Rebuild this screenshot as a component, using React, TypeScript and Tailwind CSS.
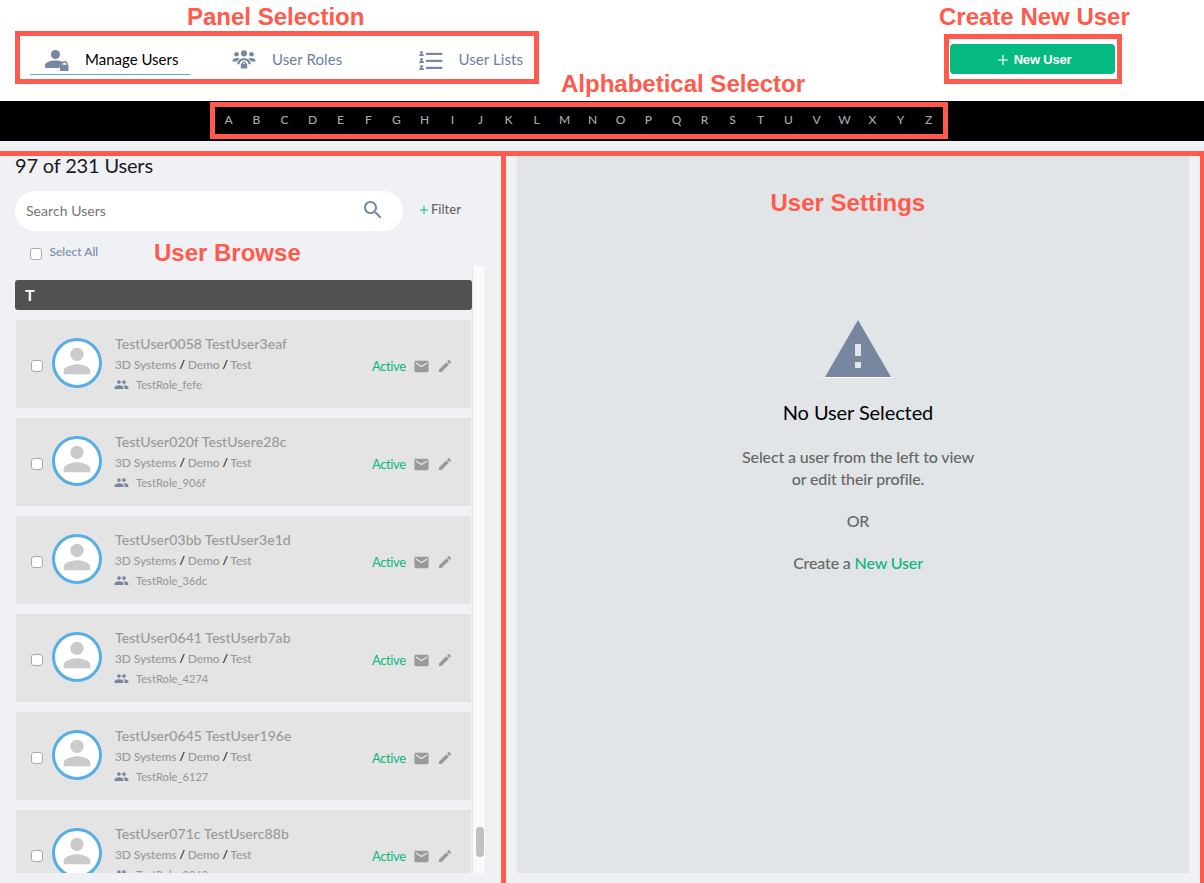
import React from 'react';

const LETTERS = 'ABCDEFGHIJKLMNOPQRSTUVWXYZ'.split('');

const USERS = [
  { name: 'TestUser0058 TestUser3eaf', role: 'TestRole_fefe' },
  { name: 'TestUser020f TestUsere28c', role: 'TestRole_906f' },
  { name: 'TestUser03bb TestUser3e1d', role: 'TestRole_36dc' },
  { name: 'TestUser0641 TestUserb7ab', role: 'TestRole_4274' },
  { name: 'TestUser0645 TestUser196e', role: 'TestRole_6127' },
  { name: 'TestUser071c TestUserc88b', role: 'TestRole_9868' },
];

function Icon({ d, className }: { d: string; className: string }) {
  return (
    <svg viewBox="0 0 24 24" fill="currentColor" className={`block shrink-0 ${className}`}>
      <path d={d} />
    </svg>
  );
}

const PERSON =
  'M12 12c2.21 0 4-1.79 4-4s-1.79-4-4-4-4 1.79-4 4 1.79 4 4 4zm0 2c-2.67 0-8 1.34-8 4v2h16v-2c0-2.66-5.33-4-8-4z';
const MAIL =
  'M20 4H4c-1.1 0-1.99.9-1.99 2L2 18c0 1.1.9 2 2 2h16c1.1 0 2-.9 2-2V6c0-1.1-.9-2-2-2zm0 4l-8 5-8-5V6l8 5 8-5v2z';
const PENCIL =
  'M3 17.25V21h3.75L17.81 9.94l-3.75-3.75L3 17.25zM20.71 7.04c.39-.39.39-1.02 0-1.41l-2.34-2.34c-.39-.39-1.02-.39-1.41 0l-1.83 1.83 3.75 3.75 1.83-1.83z';
const SEARCH =
  'M15.5 14h-.79l-.28-.27C15.41 12.59 16 11.11 16 9.5 16 5.91 13.09 3 9.5 3S3 5.91 3 9.5 5.91 16 9.5 16c1.61 0 3.09-.59 4.23-1.57l.27.28v.79l5 4.99L20.49 19l-4.99-5zm-6 0C7.01 14 5 11.99 5 9.5S7.01 5 9.5 5 14 7.01 14 9.5 11.99 14 9.5 14z';
const PEOPLE =
  'M16 11c1.66 0 2.99-1.34 2.99-3S17.66 5 16 5c-1.66 0-3 1.34-3 3s1.34 3 3 3zm-8 0c1.66 0 2.99-1.34 2.99-3S9.66 5 8 5C6.34 5 5 6.34 5 8s1.34 3 3 3zm0 2c-2.33 0-7 1.17-7 3.5V19h14v-2.5c0-2.33-4.67-3.5-7-3.5zm8 0c-.29 0-.62.02-.97.05 1.16.84 1.97 1.97 1.97 3.45V19h6v-2.5c0-2.33-4.67-3.5-7-3.5z';
const WARNING = 'M1 21h22L12 2 1 21zm12-3h-2v-2h2v2zm0-4h-2v-4h2v4z';

function ManageIcon() {
  return (
    <svg width="24" height="22" viewBox="0 0 24 22" fill="#76879f" className="block shrink-0">
      <circle cx="10.5" cy="4.5" r="4.5" />
      <path d="M0 18v-2.8C0 12 5 10.4 10.5 10.4c3 0 5.600.5 7.500 1.500-1.300.7-2 1.700-2 3h-1.200V18z" />
      <path d="M15 14.700h1.400v-.7a3.100 3.100 0 0 1 6.200 0v.7H23.500V21H15zm2.800 0h3.400v-.6a1.700 1.700 0 0 0-3.400 0z" />
    </svg>
  );
}

function RolesIcon() {
  return (
    <svg width="24" height="20" viewBox="0 0 24 20" className="block shrink-0">
      <g fill="#76879f">
        <circle cx="12" cy="3.300" r="3.100" />
        <circle cx="4.500" cy="4.200" r="2.300" />
        <circle cx="19.500" cy="4.200" r="2.300" />
        <path d="M.4 11.500C.4 9 2.500 7.900 4.800 7.900c1.200 0 2.100.2 2.900.6L4.700 11.500z" />
        <path d="M23.600 11.500c0-2.500-2.100-3.600-4.400-3.600-1.200 0-2.100.2-2.900.6l3 3z" />
        <path d="M5.200 14.300C5.500 10.300 8.500 8.300 12 8.300s6.500 2 6.800 6h-2.200c-.4-2.700-2.200-4-4.600-4s-4.200 1.300-4.600 4z" />
        <path d="M8.800 13.800h.8a2.400 2.400 0 0 1 4.800 0h.8V18.600H8.800zm2.100 0h2.200a1.100 1.100 0 0 0-2.200 0z" />
      </g>
    </svg>
  );
}

function ListsIcon() {
  return (
    <svg width="24" height="20" viewBox="0 0 24 20" fill="#76879f" className="block shrink-0">
      {[0, 7, 14].map((y) => (
        <g key={y}>
          <circle cx="2.500" cy={y + 1.4} r="1.400" />
          <path d={`M.2 ${y + 5}v-.8c0-1.2 1.2-1.5 2.300-1.500s2.300.3 2.300 1.500v.8z`} />
          <rect x="7" y={y + 1.8} width="16.300" height="2.200" />
        </g>
      ))}
    </svg>
  );
}

function Box({ className }: { className: string }) {
  return <span className={`block size-3 shrink-0 rounded-[3px] border border-[#a9a9a9] bg-white ${className}`} />;
}

function UserCard({ name, role }: { name: string; role: string }) {
  return (
    <div className="mb-2.5 ml-px flex h-[88px] w-[455px] shrink-0 bg-[#e4e4e4] text-[#999]">
      <Box className="mt-10 ml-[15px]" />
      <div className="mt-[18px] ml-[9px] flex size-[50px] shrink-0 justify-center rounded-full border-[3px] border-[#56aee5] bg-white">
        <Icon d={PERSON} className="size-10 text-[#cbcbcb]" />
      </div>
      <div className="mt-[14px] ml-[13px] w-[257px] font-medium whitespace-nowrap">
        <div className="text-[14px] leading-5 tracking-[0.07px]">{name}</div>
        <div className="mt-0.5 text-[12px] leading-[18px] tracking-[-0.1px]">
          3D Systems <span className="text-black">/</span> Demo <span className="text-black">/</span> Test
        </div>
        <div className="mt-0.5 flex items-center text-[11px] leading-[18px]">
          <Icon d={PEOPLE} className="-mt-px -ml-px size-[15px] text-[#76879f]" />
          <span className="ml-[7px] tracking-[0.05px]">{role}</span>
        </div>
      </div>
      <div className="mt-[37px] flex h-[18px] items-center">
        <span className="w-[41px] text-[13px] leading-[18px] tracking-[-0.4px] text-[#0bb67c]">Active</span>
        <Icon d={MAIL} className="size-[17px]" />
        <Icon d={PENCIL} className="ml-[7px] size-4" />
      </div>
    </div>
  );
}

const NOTE = "absolute whitespace-nowrap font-['Liberation_Sans',Arial,sans-serif] text-[24px] leading-7 font-bold text-[#ff5a4b]";
const FRAME = 'absolute border-[5px] border-[#ff5a4b]';

function Annotations() {
  return (
    <div className="pointer-events-none absolute inset-0">
      <div className={`${NOTE} top-[3px] left-[187px]`}>Panel Selection</div>
      <div className={`${NOTE} top-[3px] left-[939px]`}>Create New User</div>
      <div className={`${NOTE} top-[70px] left-[561px]`}>Alphabetical Selector</div>
      <div className={`${NOTE} top-[239px] left-[154px]`}>User Browse</div>
      <div className={`${NOTE} top-[189px] left-[770.5px]`}>User Settings</div>
      <div className={`${FRAME} top-[31px] left-[15px] h-[53px] w-[524px]`} />
      <div className={`${FRAME} top-[34px] left-[944px] h-[50px] w-[178px]`} />
      <div className={`${FRAME} top-[102px] left-[210px] h-[37px] w-[738px]`} />
      <div className="absolute top-[151px] left-0 h-[5px] w-full bg-[#ff5a4b]" />
      <div className="absolute top-[151px] bottom-0 left-[501px] w-[5px] bg-[#ff5a4b]" />
      <div className="absolute top-[151px] right-0 bottom-0 w-1 bg-[#ff5a4b]" />
    </div>
  );
}

export default function App() {
  return (
    <div className="relative flex h-[883px] w-[1204px] flex-col overflow-hidden bg-[#f0f1f5] font-[Lato,sans-serif]">
      <header className="flex h-[101px] shrink-0 items-start bg-white text-[15px] leading-5 text-[#6c80a3]">
        <nav className="flex whitespace-nowrap">
          <div className="mt-11 ml-[30px] flex h-[31px] w-40 items-center border-b border-[#56aee5] pl-[15px]">
            <div className="mt-1"><ManageIcon /></div>
            <span className="ml-4 text-black">Manage Users</span>
          </div>
          <div className="mt-11 ml-[42px] flex h-[31px] w-[187px] items-center">
            <RolesIcon />
            <span className="-mt-0.5 ml-4 tracking-[0.08px]">User Roles</span>
          </div>
          <div className="mt-11 flex h-[31px] items-center">
            <div className="mt-0.5"><ListsIcon /></div>
            <span className="-mt-0.5 ml-[15.5px] tracking-[0.08px]">User Lists</span>
          </div>
        </nav>
        <button className="mt-11 mr-[89px] ml-auto flex h-[30px] w-[165px] items-center justify-center gap-1.5 rounded-[4px] bg-[#04ba80] pt-px pl-1 font-['Liberation_Sans',Arial,sans-serif] text-[13px] font-bold tracking-[-0.2px] text-white">
          <svg width="10" height="10" viewBox="0 0 10 10" className="block">
            <path d="M5 0v10M0 5h10" stroke="#fff" strokeWidth="1.200" />
          </svg>
          New User
        </button>
      </header>

      <div className="flex h-10 shrink-0 items-center justify-center bg-black pb-[3px] text-[12px] font-medium text-[#aaa]">
        <div className="mr-[47px] flex">
          {LETTERS.map((l) => (
            <span key={l} className="w-7 text-center">{l}</span>
          ))}
        </div>
      </div>

      <main className="flex min-h-0 flex-1 pb-2.5">
        <section className="flex w-[517px] shrink-0 flex-col pl-[15px]">
          <h1 className="mt-[11px] text-[20px] leading-[26px] tracking-[-0.17px] text-[#1a1a1a]">97 of 231 Users</h1>
          <div className="mt-[13px] flex h-10 items-center">
            <div className="flex h-10 w-[388px] items-center justify-between rounded-full bg-white pr-[18px] pl-[11px] text-[14px] text-[#757575]">
              <span className="-mt-0.5 tracking-[0.05px]">Search Users</span>
              <Icon d={SEARCH} className="-mt-0.5 size-6 text-[#76879f]" />
            </div>
            <div className="-mt-0.5 ml-[17px] flex items-center text-[13px] font-medium text-[#666]">
              <svg width="8" height="8" viewBox="0 0 8 8" className="mr-[3px] block">
                <path d="M4 0v8M0 4h8" stroke="#04ba80" />
              </svg>
              Filter
            </div>
          </div>
          <div className="flex h-[35px] shrink-0 pt-[11px] pl-[15px] text-[12px] leading-5 text-[#7b8bab]">
            <Box className="mt-1.5" />
            <span className="ml-[7.5px] font-medium">Select All</span>
          </div>
          <div className="flex min-h-0 flex-1">
            <div className="flex w-[457px] flex-col overflow-hidden pt-3.5">
              <div className="mb-2.5 h-[30px] shrink-0 rounded-[3px] bg-[#515151] pl-2.5 text-[16px] leading-[29px] font-bold text-white">T</div>
              {USERS.map((u) => (
                <UserCard key={u.name} {...u} />
              ))}
            </div>
            <div className="flex w-[14px] flex-col justify-end border-x border-l-[#e6e6e8] border-r-[#ececee] bg-[#fafafa] pb-4">
              <div className="ml-[3px] h-[30px] w-2 rounded-full bg-[#c1c1c1]" />
            </div>
          </div>
        </section>

        <section className="mt-[10px] flex w-[672px] flex-col items-center bg-[#e1e5e8] pl-[10px] text-center text-[16px] leading-[22px] font-medium tracking-[-0.15px] text-[#666]">
          <div className="mt-[163px] flex h-[72px] flex-col items-center">
            <Icon d={WARNING} className="size-[72px] text-[#76879f]" />
            <div className="-mt-[9px] h-px w-[70px] bg-white" />
          </div>
          <h2 className="mt-[12px] text-[20px] leading-7 font-normal tracking-[-0.09px] text-black">No User Selected</h2>
          <p className="mt-[20px]">
            Select a user from the left to view
            <br />
            or edit their profile.
          </p>
          <p className="mt-5">OR</p>
          <p className="mt-5">
            Create a <span className="text-[#0bb67c]">New User</span>
          </p>
        </section>
      </main>

      <Annotations />
    </div>
  );
}
